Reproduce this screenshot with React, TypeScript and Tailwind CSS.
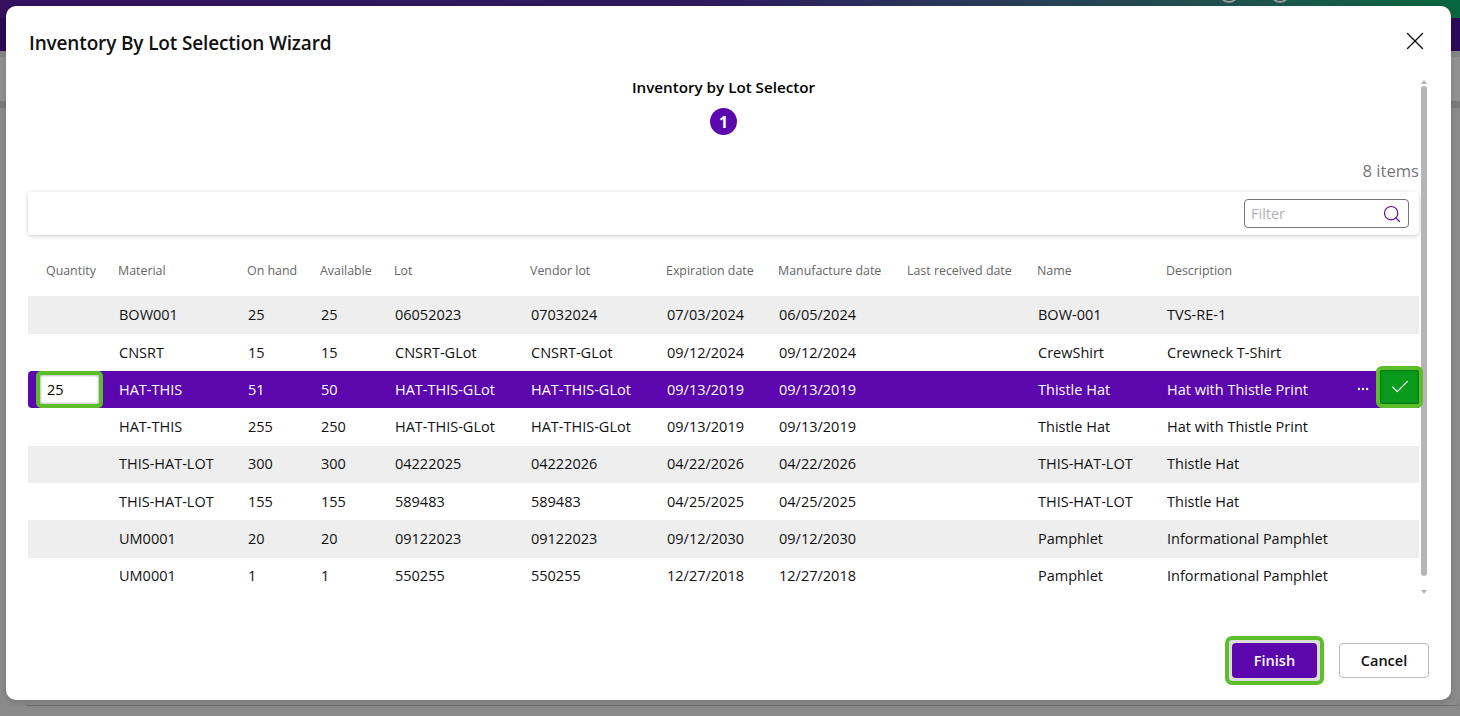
import { Check, MoreHorizontal, Search, X } from "lucide-react";

const columns = "grid grid-cols-[82px_129px_73px_74px_136px_136px_112px_129px_130px_129px_260px]";

const headers = [
  "Quantity",
  "Material",
  "On hand",
  "Available",
  "Lot",
  "Vendor lot",
  "Expiration date",
  "Manufacture date",
  "Last received date",
  "Name",
  "Description",
];

const rows = [
  ["BOW001", "25", "25", "06052023", "07032024", "07/03/2024", "06/05/2024", "", "BOW-001", "TVS-RE-1"],
  ["CNSRT", "15", "15", "CNSRT-GLot", "CNSRT-GLot", "09/12/2024", "09/12/2024", "", "CrewShirt", "Crewneck T-Shirt"],
  ["HAT-THIS", "51", "50", "HAT-THIS-GLot", "HAT-THIS-GLot", "09/13/2019", "09/13/2019", "", "Thistle Hat", "Hat with Thistle Print"],
  ["HAT-THIS", "255", "250", "HAT-THIS-GLot", "HAT-THIS-GLot", "09/13/2019", "09/13/2019", "", "Thistle Hat", "Hat with Thistle Print"],
  ["THIS-HAT-LOT", "300", "300", "04222025", "04222026", "04/22/2026", "04/22/2026", "", "THIS-HAT-LOT", "Thistle Hat"],
  ["THIS-HAT-LOT", "155", "155", "589483", "589483", "04/25/2025", "04/25/2025", "", "THIS-HAT-LOT", "Thistle Hat"],
  ["UM0001", "20", "20", "09122023", "09122023", "09/12/2030", "09/12/2030", "", "Pamphlet", "Informational Pamphlet"],
  ["UM0001", "1", "1", "550255", "550255", "12/27/2018", "12/27/2018", "", "Pamphlet", "Informational Pamphlet"],
];

function SelectedRow({ row }: { row: string[] }) {
  return (
    <div className={`${columns} relative h-[37.33px] items-center rounded-l-[4px] bg-[#5b07ad] text-[14.5px] text-white`}>
      <div className="pl-[8px]">
        <div className="h-[37px] w-[67px] rounded-[5px] border-[4px] border-[#5cbf2a] bg-white py-[5px] pl-[7px] text-[14.5px] leading-[19px] text-black shadow-[inset_0_0_3px_rgba(0,0,0,0.5)]">
          25
        </div>
      </div>
      {row.map((cell, i) => (
        <div key={i} className="whitespace-nowrap pl-[9px]">
          {cell}
        </div>
      ))}
      <MoreHorizontal className="absolute left-[1328px] top-[11px] h-[14px] w-[14px] text-white" strokeWidth={2.2} />
      <div className="absolute left-[1348px] top-[-5px] flex h-[42px] w-[47px] items-center justify-center rounded-[6px] border-[4px] border-[#5cbf2a] bg-[#0a9b1d] shadow-[inset_0_0_3px_rgba(0,0,0,0.5)]">
        <Check className="h-[22px] w-[22px] text-white" strokeWidth={1.2} />
      </div>
    </div>
  );
}

function Row({ row, shaded }: { row: string[]; shaded: boolean }) {
  return (
    <div className={`${columns} h-[37.33px] items-center text-[14.5px] text-[#111] ${shaded ? "bg-[#eeeeee]" : "bg-white"}`}>
      <div />
      {row.map((cell, i) => (
        <div key={i} className="whitespace-nowrap pl-[9px]">
          {cell}
        </div>
      ))}
    </div>
  );
}

export default function App() {
  return (
    <div className="relative h-[716px] w-[1460px] overflow-hidden bg-[#8a8a8a] font-['Open_Sans','Noto_Sans',sans-serif]">
      {/* dimmed page behind the dialog */}
      <div className="relative h-[18px] bg-gradient-to-r from-[#35115f] via-[#2d1c5f] to-[#06663f]">
        <div className="absolute left-[1219px] top-[-17px] h-[20px] w-[20px] rounded-full border-2 border-[#9a9a9a]" />
        <div className="absolute left-[1270px] top-[-17px] h-[20px] w-[20px] rounded-full border-2 border-[#9a9a9a]" />
      </div>
      <div className="h-[33px] bg-[#2b0a5c]" />
      <div className="h-[6px] bg-[#858585]" />
      <div className="h-[44px] bg-[#919191]" />
      <div className="h-[7px] bg-[#7b7b7b]" />
      <div className="absolute bottom-[10px] left-[24px] h-[20px] w-[1436px] rounded-b-[4px] border-b border-[#6f6f6f]" />

      <div className="absolute left-[6px] top-[6px] flex h-[694px] w-[1445px] flex-col rounded-[10px] bg-white shadow-[0_2px_6px_rgba(0,0,0,0.15)]">
        <div className="flex h-[74px] shrink-0 items-start justify-between pl-[23px] pr-[21px] pt-[23px]">
          <h1 className="text-[19px] font-semibold leading-[28px] tracking-[-0.15px] text-[#111]">
            Inventory By Lot Selection Wizard
          </h1>
          <X className="mt-[-3px] h-[30px] w-[30px] text-[#111]" strokeWidth={1.1} />
        </div>

        <div className="flex min-h-0 flex-1 pl-[22px]">
          <div className="w-[1391px]">
            <div className="flex flex-col items-center">
              <div className="mt-[-3px] text-[15.2px] font-semibold leading-[20px] text-black">Inventory by Lot Selector</div>
              <div className="mt-[11px] flex h-[27px] w-[27px] items-center justify-center rounded-full bg-[#5b07ad] text-[16px] font-bold text-white">
                1
              </div>
            </div>

            <div className="mt-[24px] text-right text-[16.6px] leading-[24px] text-[#777777]">8 items</div>

            <div className="mt-[9px] flex h-[43px] items-center justify-end rounded-[4px] pr-[10px] shadow-[0_1px_4px_rgba(0,0,0,0.2)]">
              <div className="flex h-[29px] w-[165px] items-center justify-between rounded-[4px] border border-[#767676] pl-[6px] pr-[6px]">
                <span className="text-[14.5px] text-[#b3b3b3]">Filter</span>
                <Search className="h-[20px] w-[20px] text-[#5b07ad]" strokeWidth={1.4} />
              </div>
            </div>

            <div className={`${columns} mt-[14px] h-[47.4px] items-center pb-[2px] text-[12.4px] text-[#666666]`}>
              {headers.map((label, i) => (
                <div key={label} className={`whitespace-nowrap ${i === 0 ? "pl-[18px]" : "pl-[8px]"}`}>
                  {label}
                </div>
              ))}
            </div>

            {rows.map((row, i) =>
              i === 2 ? (
                <SelectedRow key={i} row={row} />
              ) : (
                <Row key={i} row={row} shaded={i % 2 === 0} />
              ),
            )}
          </div>

          <div className="ml-[2px] flex h-[520px] w-[6px] flex-col items-center">
            <div className="h-0 w-0 border-x-[3px] border-b-[4px] border-x-transparent border-b-[#b5b5b5]" />
            <div className="mt-[2px] h-[490px] w-[6px] rounded-full bg-[#b5b5b5]" />
            <div className="mt-[14px] h-0 w-0 border-x-[3px] border-t-[4px] border-x-transparent border-t-[#b5b5b5]" />
          </div>
        </div>

        <div className="flex h-[64px] shrink-0 items-start justify-end gap-[15px] pr-[22px] pt-[7px]">
          <div className="mt-[-7px] rounded-[7px] border-[4px] border-[#5cbf2a] bg-[#dddddd] p-[3px]">
            <button className="block h-[35px] w-[85px] rounded-[4px] bg-[#5b07ad] pt-[1px] text-[14.5px] font-semibold text-white">
              Finish
            </button>
          </div>
          <button className="h-[35px] w-[90px] rounded-[4px] border border-[#bbbbbb] bg-white pt-[1px] text-[14.5px] font-semibold text-[#111]">
            Cancel
          </button>
        </div>
      </div>
    </div>
  );
}
